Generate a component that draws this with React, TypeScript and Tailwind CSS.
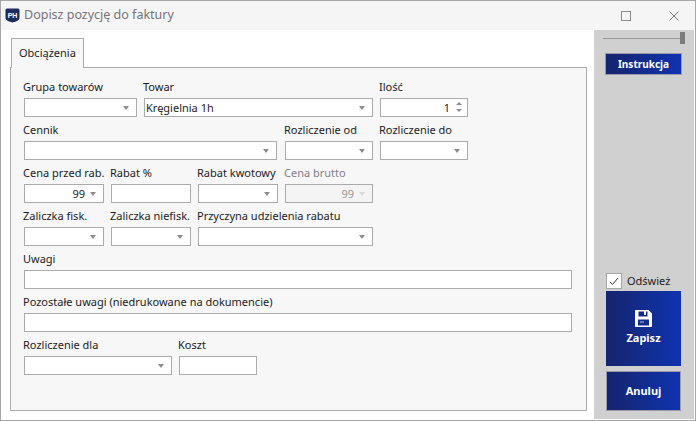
import React from 'react';

const Caret = ({ disabled }: { disabled?: boolean }) => (
  <svg width="6" height="4" viewBox="0 0 6 4" className="shrink-0">
    <path d="M0 0h6L3 4z" fill={disabled ? '#d9d9d9' : '#8c8c8c'} />
  </svg>
);

const Label = ({ text, muted }: { text: string; muted?: boolean }) => (
  <div className={`-ml-px h-[14px] text-[11px] leading-[14px] whitespace-nowrap ${muted ? 'text-[#85808a]' : 'text-[#1c1c1c]'}`}>
    {text}
  </div>
);

const Combo = ({ value, right, disabled }: { value?: string; right?: boolean; disabled?: boolean }) => (
  <div
    className={`flex h-[19px] items-center border border-[#ababab] pl-[1px] pr-[7px] text-[11px] ${
      disabled ? 'bg-[#f4f4f4] text-[#9a9a9a]' : 'bg-white text-[#1c1c1c]'
    }`}
  >
    <span className={`flex-1 whitespace-nowrap leading-[17px] ${right ? 'pr-[5px] text-right' : ''}`}>{value}</span>
    <Caret disabled={disabled} />
  </div>
);

const Input = () => <div className="h-[19px] border border-[#ababab] bg-white" />;

const Field = ({ label, w, muted, children }: { label: string; w: string; muted?: boolean; children: React.ReactNode }) => (
  <div className={`flex flex-col gap-[4px] ${w}`}>
    <Label text={label} muted={muted} />
    {children}
  </div>
);

const blueBtn = 'bg-gradient-to-r from-[#14246e] to-[#0f33b0] text-white font-bold';

export default function App() {
  return (
    <div className="flex h-[421px] w-[696px] flex-col border border-[#a6a6a6] bg-white font-['Noto_Sans',sans-serif]">
      {/* title bar */}
      <div className="flex h-[29px] shrink-0 items-center bg-[#f5f5f5] pl-[4px]">
        <svg width="15" height="15" viewBox="0 0 15 15">
          <path d="M2 0.5h11a1.5 1.5 0 0 1 1.5 1.5v8c0 2-3 3.5-7 4.5C3.5 13.5.5 12 .5 10V2A1.5 1.5 0 0 1 2 .5z" fill="#1d2c5e" />
          <text x="7.5" y="9.5" textAnchor="middle" fontSize="7" fontWeight="700" fill="#fff" fontFamily="Liberation Sans">PH</text>
        </svg>
        <span className="ml-[4px] text-[12.5px] text-[#77737b]">Dopisz pozycję do faktury</span>
        <div className="ml-auto flex items-center gap-[38px] pr-[16px]">
          <div className="h-[10px] w-[10px] border border-[#8a8a8a]" />
          <svg width="10" height="10" viewBox="0 0 10 10">
            <path d="M.5.5l9 9M9.5.5l-9 9" stroke="#7a7a7a" strokeWidth="1" fill="none" />
          </svg>
        </div>
      </div>

      <div className="flex min-h-0 flex-1">
        {/* form area */}
        <div className="flex w-[593px] flex-col pl-[9px] pr-[7px] pt-[8px]">
          <div className="z-10 -mb-[1px] ml-[1px] flex h-[30px] w-[73px] items-center border border-b-0 border-[#ababab] bg-[#f7f7f7] pl-[7px] text-[11px] text-[#1c1c1c]">
            Obciążenia
          </div>
          <div className="flex h-[344px] flex-col gap-[6px] border border-[#ababab] bg-[#f7f7f7] pl-[13px] pt-[12px]">
            <div className="flex gap-[7px]">
              <Field label="Grupa towarów" w="w-[113px]"><Combo /></Field>
              <Field label="Towar" w="w-[229px]"><Combo value="Kręgielnia 1h" /></Field>
              <Field label="Ilość" w="w-[88px]">
                <div className="flex h-[19px] items-center border border-[#ababab] bg-white pr-[5px] text-[11px] text-[#1c1c1c]">
                  <span className="flex-1 pr-[6px] text-right leading-[17px]">1</span>
                  <svg width="6" height="11" viewBox="0 0 6 11">
                    <path d="M3 0L6 3H0z" fill="#8c8c8c" />
                    <path d="M0 7h6L3 10z" fill="#8c8c8c" />
                  </svg>
                </div>
              </Field>
            </div>
            <div className="flex gap-[8px]">
              <Field label="Cennik" w="w-[253px]"><Combo /></Field>
              <Field label="Rozliczenie od" w="w-[88px]"><Combo /></Field>
              <div className="-ml-[1px]">
                <Field label="Rozliczenie do" w="w-[88px]"><Combo /></Field>
              </div>
            </div>
            <div className="flex gap-[7px]">
              <Field label="Cena przed rab." w="w-[80px]"><Combo value="99" right /></Field>
              <Field label="Rabat %" w="w-[80px]"><Input /></Field>
              <Field label="Rabat kwotowy" w="w-[80px]"><Combo /></Field>
              <Field label="Cena brutto" w="w-[88px]" muted><Combo value="99" right disabled /></Field>
            </div>
            <div className="flex gap-[7px]">
              <Field label="Zaliczka fisk." w="w-[80px]"><Combo /></Field>
              <Field label="Zaliczka niefisk." w="w-[80px]"><Combo /></Field>
              <Field label="Przyczyna udzielenia rabatu" w="w-[175px]"><Combo /></Field>
            </div>
            <Field label="Uwagi" w="w-[548px]"><Input /></Field>
            <Field label="Pozostałe uwagi (niedrukowane na dokumencie)" w="w-[548px]"><Input /></Field>
            <div className="flex gap-[7px]">
              <Field label="Rozliczenie dla" w="w-[148px]"><Combo /></Field>
              <Field label="Koszt" w="w-[78px]"><Input /></Field>
            </div>
          </div>
        </div>

        {/* right pane */}
        <div className="mb-[1px] flex w-[100px] flex-col bg-[#d0d0d0] pl-[11px]">
          <div className="relative mt-[2px] h-[12px] w-[88px]">
            <div className="absolute -left-[2px] right-[8px] top-[6px] h-[1px] bg-[#9a9a9a]" />
            <div className="absolute right-[8px] top-0 h-[12px] w-[5px] bg-[#7c7c7c]" />
          </div>
          <div className={`mt-[9px] flex h-[22px] w-[77px] items-center justify-center border border-[#9a9aa8] text-[10px] ${blueBtn}`}>
            Instrukcja
          </div>
          <div className="ml-[1px] mt-auto flex h-[16px] items-center gap-[5px] text-[11px] text-[#1c1c1c]">
            <div className="flex h-[16px] w-[16px] items-center justify-center border border-[#a6a6a6] bg-white">
              <svg width="10" height="9" viewBox="0 0 10 9">
                <path d="M1 5l2.5 2.5L9 1" stroke="#333" strokeWidth="1" fill="none" />
              </svg>
            </div>
            Odśwież
          </div>
          <div className={`ml-[1px] mt-[2px] flex h-[75px] w-[75px] flex-col items-center justify-center gap-[3px] text-[11px] ${blueBtn}`}>
            <svg width="17" height="17" viewBox="0 0 17 17">
              <path fillRule="evenodd" d="M1 0H13.5L17 3.5V16a1 1 0 0 1-1 1H1a1 1 0 0 1-1-1V1a1 1 0 0 1 1-1zM3.5 1.5V6.5H12.5V1.5H11V5H9V1.5zM3 9.5V15.5H14V9.5z" fill="#fff" />
              <path d="M5 12h4" stroke="#fff" strokeWidth="1" opacity="0.7" />
            </svg>
            Zapisz
          </div>
          <div className={`mb-[8px] ml-[1px] mt-[5px] flex h-[40px] w-[75px] items-center justify-center border border-[#9a9aa8] text-[11px] ${blueBtn}`}>
            Anuluj
          </div>
        </div>
      </div>
    </div>
  );
}
